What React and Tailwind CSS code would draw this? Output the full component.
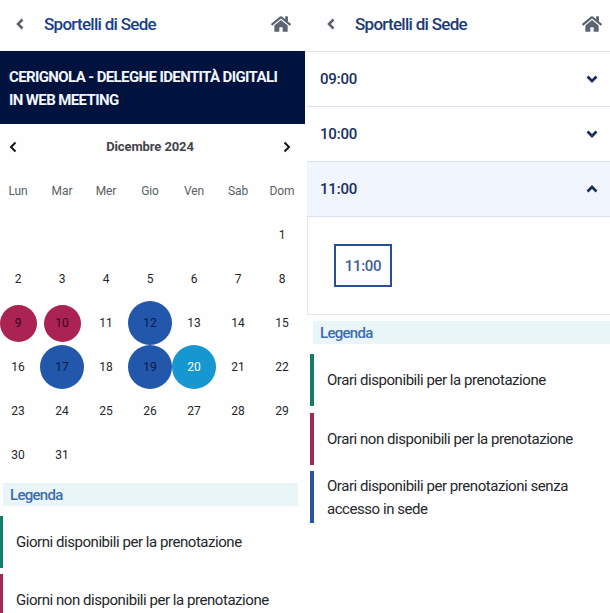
import { FaHome } from "react-icons/fa";

const weekdays = ["Lun", "Mar", "Mer", "Gio", "Ven", "Sab", "Dom"];

const marks = {
  9: "size-[37px] bg-[#aa2353] text-[#35081c]",
  10: "size-[37px] bg-[#aa2353] text-[#35081c]",
  12: "size-11 bg-[#2257ab] text-[#071c46]",
  17: "size-11 bg-[#2257ab] text-[#071c46]",
  19: "size-11 bg-[#2257ab] text-[#071c46]",
  20: "size-11 bg-[#1697d2] text-white",
};

function Chevron({ className }) {
  return (
    <svg viewBox="0 0 12 12" fill="none" stroke="currentColor" className={className}>
      <path d="M8.5 1.5 4 6l4.5 4.5" />
    </svg>
  );
}

function Header({ className, titleColor }) {
  return (
    <header className={`flex shrink-0 items-center pb-[3px] ${className}`}>
      <Chevron className="size-3 stroke-[2.5] text-[#59616c]" />
      <h1 className={`ml-[18px] text-[17px] leading-6 font-medium tracking-[-0.72px] whitespace-nowrap ${titleColor}`}>
        Sportelli di Sede
      </h1>
      <FaHome className="ml-auto size-5 text-[#5b6470]" />
    </header>
  );
}

function LegendItem({ color, className = "", children }) {
  return (
    <li className={`flex h-[52px] items-center ${className} ${color}`}>
      <span className="pt-px text-[15px] leading-[22.5px] tracking-[-0.45px] whitespace-nowrap">{children}</span>
    </li>
  );
}

function Slot({ time, open }) {
  return (
    <div
      className={`flex h-[55px] items-center border-b border-[#d9e1f0] pr-[12px] pl-[13px] text-[#162f61] ${
        open ? "bg-[#f1f5fd]" : "bg-[#fefefe]"
      }`}
    >
      <span className="pt-px text-[15px] font-medium tracking-[-0.2px]">{time}</span>
      <Chevron className={`ml-auto size-3 stroke-[2.7] ${open ? "rotate-90" : "-rotate-90"}`} />
    </div>
  );
}

function CalendarScreen() {
  return (
    <section className="flex w-[305px] shrink-0 flex-col overflow-hidden">
      <Header className="h-[51px] pr-[14px] pl-[14px]" titleColor="text-[#193f8a]" />
      <div className="h-[73px] shrink-0 bg-[#00133f] px-[9px] pt-[15px] text-[15px] leading-[22.5px] font-bold tracking-[-0.62px] whitespace-nowrap text-[#f3f5fa]">
        <p>CERIGNOLA - DELEGHE IDENTITÀ DIGITALI</p>
        <p>IN WEB MEETING</p>
      </div>
      <div className="flex h-[45px] shrink-0 items-center justify-between pr-[12px] pl-[7px] text-[#111318]">
        <Chevron className="size-3 stroke-2" />
        <h2 className="text-[13px] font-bold tracking-[-0.1px] text-[#42454b]">Dicembre 2024</h2>
        <Chevron className="size-3 rotate-180 stroke-2" />
      </div>
      <div className="-ml-1 grid w-[308px] shrink-0 grid-cols-7 text-[12px] tracking-[-0.1px] text-[#24272c]">
        {weekdays.map((day) => (
          <div key={day} className="flex h-11 items-center justify-center text-[#5b5e63]">{day}</div>
        ))}
        {Array.from({ length: 31 }, (_, i) => i + 1).map((day) => (
          <div key={day} className={`flex h-11 items-center justify-center ${day === 1 ? "col-start-7" : ""}`}>
            <span className={`flex shrink-0 items-center justify-center rounded-full ${marks[day] || ""}`}>{day}</span>
          </div>
        ))}
      </div>
      <h3 className="mt-[6px] mr-[7px] ml-[3px] h-[23px] shrink-0 bg-[#eaf5f7] pl-[7px] text-[15px] leading-[25px] font-medium tracking-[-0.7px] text-[#3b6db1]">
        Legenda
      </h3>
      <ul className="mt-[10px] flex flex-col gap-[6px] text-[#25272b]">
        <LegendItem className="shrink-0 border-l-3 pl-[13px]" color="border-[#157c68]">
          Giorni disponibili per la prenotazione
        </LegendItem>
        <LegendItem className="shrink-0 border-l-3 pl-[13px]" color="border-[#a22b56]">
          Giorni non disponibili per la prenotazione
        </LegendItem>
      </ul>
    </section>
  );
}

function TimesScreen() {
  return (
    <section className="flex w-[305px] shrink-0 flex-col">
      <Header className="h-[52px] border-b border-[#dfe2e8] pr-[8px] pl-[20px]" titleColor="text-[#1b3a76]" />
      <div className="ml-[2px] shrink-0">
        <Slot time="09:00" />
        <Slot time="10:00" />
        <Slot time="11:00" open />
        <div className="h-[98px] border-b border-l border-[#e2e7ef] pt-[27px] pl-[26px]">
          <button className="flex h-[43px] w-[58px] items-center justify-center border-2 border-[#294f94] pt-px text-[15px] font-medium tracking-[-0.3px] text-[#3f5f96]">
            11:00
          </button>
        </div>
      </div>
      <h3 className="mt-[6px] ml-[8px] h-[23px] shrink-0 bg-[#eaf5f7] pl-[7px] text-[15px] leading-[25px] font-medium tracking-[-0.7px] text-[#3b6db1]">
        Legenda
      </h3>
      <ul className="mt-[10px] ml-[5px] flex flex-col gap-[6.5px] text-[#25272b]">
        <LegendItem className="border-l-4 pl-[13px]" color="border-[#157c68]">
          Orari disponibili per la prenotazione
        </LegendItem>
        <LegendItem className="border-l-4 pl-[13px]" color="border-[#a22b56]">
          Orari non disponibili per la prenotazione
        </LegendItem>
        <LegendItem className="border-l-4 pl-[13px]" color="border-[#2852a0]">
          Orari disponibili per prenotazioni senza<br />accesso in sede
        </LegendItem>
      </ul>
    </section>
  );
}

export default function App() {
  return (
    <main className="flex h-[613px] w-[610px] overflow-hidden bg-[#fefefe] font-['Roboto','Liberation_Sans',sans-serif]">
      <CalendarScreen />
      <TimesScreen />
    </main>
  );
}
